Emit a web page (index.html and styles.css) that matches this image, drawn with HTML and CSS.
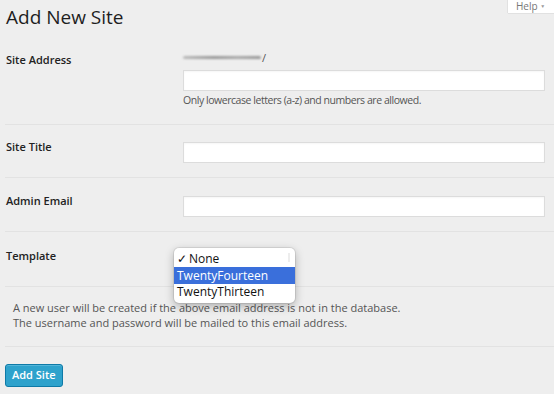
FILE: index.html
```html
<!DOCTYPE html>
<html lang="en">
<head>
  <meta charset="UTF-8">
  <title>Add New Site</title>
  <link rel="stylesheet" href="styles.css">
</head>
<body>
  <div class="help-tab">Help <span class="arrow">▼</span></div>

  <div class="wrap">
    <h1>Add New Site</h1>

    <form class="site-form">
      <div class="form-row row-address">
        <label class="label">Site Address</label>
        <div class="field">
          <div class="domain"><span class="blur"></span>/</div>
          <input type="text" class="text-input">
          <p class="hint">Only lowercase letters (a-z) and numbers are allowed.</p>
        </div>
      </div>

      <div class="form-row row-title">
        <label class="label">Site Title</label>
        <div class="field">
          <input type="text" class="text-input">
        </div>
      </div>

      <div class="form-row row-email">
        <label class="label">Admin Email</label>
        <div class="field">
          <input type="text" class="text-input">
        </div>
      </div>

      <div class="form-row row-template">
        <label class="label">Template</label>
        <div class="field">
          <ul class="select-menu">
            <li class="checked"><span class="check">✓</span>None<span class="scroll-mark"></span></li>
            <li class="active">TwentyFourteen</li>
            <li>TwentyThirteen</li>
          </ul>
        </div>
      </div>

      <div class="note">
        <p>A new user will be created if the above email address is not in the database.<br>
        The username and password will be mailed to this email address.</p>
      </div>

      <div class="submit-row">
        <button type="button" class="button-primary">Add Site</button>
      </div>
    </form>
  </div>
</body>
</html>
```

FILE: styles.css
```css
body {
  margin: 0;
  padding: 0;
  background: #eeeeee;
  font-family: "Open Sans", "Liberation Sans", sans-serif;
  color: #333;
  position: relative;
  overflow: hidden;
  height: 394px;
}

.help-tab {
  position: absolute;
  top: 0;
  right: 0;
  width: 38px;
  height: 13px;
  padding-left: 8px;
  background: #fff;
  box-shadow: 0 0 1px rgba(0,0,0,0.3);
  font-size: 10px;
  line-height: 12px;
  color: #777;
  white-space: nowrap;
}

.help-tab .arrow {
  font-size: 5px;
  color: #999;
  vertical-align: 2px;
}

.wrap {
  padding: 0 0 0 5px;
}

h1 {
  margin: 0;
  padding: 2px 0 0 1px;
  font-size: 19px;
  font-weight: 400;
  line-height: 30px;
  color: #1e1e1e;
}

.site-form {
  margin-top: 12px;
}

.form-row {
  display: grid;
  grid-template-columns: 178px 1fr;
  border-bottom: 1px solid #e2e2e2;
}

.label {
  padding-left: 1px;
  font-size: 11px;
  font-weight: 600;
  line-height: 16px;
  color: #222;
}

.field {
  padding-right: 9px;
}

.text-input {
  display: block;
  box-sizing: border-box;
  width: 100%;
  height: 21px;
  margin: 0;
  border: 1px solid #dcdcdc;
  background: #fff;
  box-shadow: inset 0 1px 2px rgba(0,0,0,0.04);
}

.row-address {
  padding: 7px 0 16px;
}

.row-address .label {
  padding-top: 1px;
}

.domain {
  height: 16px;
  font-size: 11px;
  line-height: 14px;
  color: #555;
}

.blur {
  display: inline-block;
  width: 78px;
  height: 3px;
  margin-right: 1px;
  vertical-align: 3px;
  background: linear-gradient(to right, #bbb, #999 40%, #aaa 70%, #999);
  border-radius: 2px;
  filter: blur(1px);
}

.row-address .text-input {
  margin-top: 3px;
}

.hint {
  margin: 2px 0 0;
  font-size: 10.5px;
  letter-spacing: -0.45px;
  line-height: 15px;
  color: #555;
}

.row-title {
  padding: 17px 0 14px;
}

.row-title .label,
.row-email .label {
  margin-top: -3px;
}

.row-email {
  padding: 18px 0 14px;
}

.row-template {
  padding: 15px 0 22px;
}

.row-template .label {
  margin-top: 1px;
}

.row-template .field {
  position: relative;
}

.select-menu {
  position: absolute;
  top: 1px;
  left: -9px;
  width: 121px;
  margin: 0;
  padding: 3px 0;
  list-style: none;
  background: #fff;
  border-radius: 5px;
  box-shadow: 0 3px 10px rgba(0,0,0,0.28), 0 0 0 1px rgba(0,0,0,0.08);
  font-size: 12px;
  line-height: 15px;
  color: #111;
  z-index: 10;
}

.select-menu li {
  padding: 0 0 1px 3px;
  position: relative;
}

.select-menu .check {
  display: inline-block;
  width: 12px;
  font-size: 12px;
}

.select-menu .active {
  background: #3a6fdb;
  color: #fff;
  padding-top: 1px;
}

.scroll-mark {
  position: absolute;
  right: 5px;
  top: 2px;
  width: 2px;
  height: 9px;
  background: #ededed;
}

.note {
  padding: 13px 0 16px 8px;
  border-bottom: 1px solid #e2e2e2;
}

.note p {
  margin: 0;
  font-size: 11px;
  line-height: 15px;
  color: #555;
}

.submit-row {
  padding: 15px 0;
}

.button-primary {
  height: 23px;
  padding: 0 6px;
  border: 1px solid #0e7aa7;
  border-radius: 3px;
  background: #2ea2cc;
  box-shadow: inset 0 1px 0 rgba(120,200,230,0.5);
  color: #fff;
  font-family: "Open Sans", "Liberation Sans", sans-serif;
  font-size: 11px;
  font-weight: 600;
  line-height: 20px;
}
```
